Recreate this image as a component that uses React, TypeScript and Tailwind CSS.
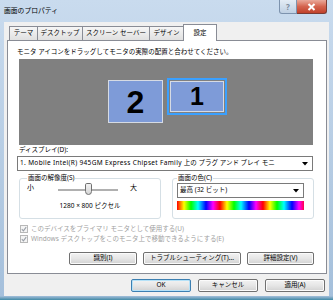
const jp = "font-['Noto_Sans','Noto_Sans_CJK_JP',sans-serif]";

function Tab({ label, width, selected }: { label: string; width: number; selected?: boolean }) {
  return (
    <div
      style={{ width }}
      className={[
        "-ml-px flex items-center justify-center border border-b-0 border-[#898c95] text-[6.5px] leading-none",
        selected
          ? "relative z-10 -mb-px h-[17px] bg-white px-[2px]"
          : "h-[14px] bg-gradient-to-b from-[#f6f6f6] to-[#e0e0e0]",
      ].join(" ")}
    >
      {label}
    </div>
  );
}

function Button({ label, width, focused }: { label: string; width: number; focused?: boolean }) {
  return (
    <div
      style={{ width }}
      className={[
        "flex h-[13px] items-center justify-center rounded-[2px] border bg-gradient-to-b from-[#f3f3f3] via-[#e6e6e6] to-[#d2d2d2] text-[6.5px] leading-none",
        focused ? "border-[#3c7fb1] shadow-[inset_0_0_0_1px_#b6e2f8]" : "border-[#707070] shadow-[inset_0_0_0_1px_#fbfbfb]",
      ].join(" ")}
    >
      {label}
    </div>
  );
}

function CheckRow({ label }: { label: string }) {
  return (
    <div className="flex h-[10px] items-center gap-[3px] pl-[12px] text-[6.5px] leading-none text-[#a0a0a0]">
      <span className="flex h-[8px] w-[8px] items-center justify-center border border-[#b8b8b8] bg-[#f4f4f4]">
        <svg width="6" height="6" viewBox="0 0 6 6">
          <path d="M0.8 3.2 L2.4 4.8 L5.2 1.2" fill="none" stroke="#9aa0a8" strokeWidth="1.1" />
        </svg>
      </span>
      {label}
    </div>
  );
}

export default function App() {
  return (
    <div className={`flex h-[300px] w-[333px] flex-col overflow-hidden bg-gradient-to-b from-[#c9dbee] via-[#b7cde4] to-[#a4bfdb] text-black ${jp}`}>
      <div className="relative flex h-[22px] shrink-0 items-center pl-[4px] text-[6.8px] leading-none">
        画面のプロパティ
        <div className="absolute right-[6px] top-0 flex">
          <div className="flex h-[14px] w-[18px] items-center justify-center rounded-bl-[3px] border border-t-0 border-[#7d93ae] bg-gradient-to-b from-[#e4ecf5] to-[#bfd0e3] text-[8px] font-bold text-[#7b8a9c]">
            ?
          </div>
          <div className="flex h-[14px] w-[30px] items-center justify-center rounded-br-[3px] border border-l-0 border-t-0 border-[#7a3b33] bg-gradient-to-b from-[#e9a99b] via-[#d4644f] to-[#c0402a]">
            <svg width="9" height="8" viewBox="0 0 9 8">
              <path d="M1.5 1 L7.5 7 M7.5 1 L1.5 7" stroke="#fff" strokeWidth="2" />
            </svg>
          </div>
        </div>
      </div>

      <div className="mx-[4px] flex h-[274px] shrink-0 flex-col bg-[#f0f0f0]">
        <div className="flex h-[18px] items-end pl-[6px]">
          <Tab label="テーマ" width={29} />
          <Tab label="デスクトップ" width={46} />
          <Tab label="スクリーン セーバー" width={68} />
          <Tab label="デザイン" width={35} />
          <Tab label="設定" width={34} selected />
        </div>

        <div className="ml-[3px] h-[234px] w-[320px] border border-[#898c95] bg-white">
          <div className="ml-[9px] mt-[7px] h-[8px] text-[6.5px] leading-[8px]">
            モニタ アイコンをドラッグしてモニタの実際の配置と合わせてください。
          </div>

          <div className="relative ml-[11px] mt-[3px] h-[86px] w-[294px] bg-[#808080]">
            <div className="absolute left-[89px] top-[21px] flex h-[43px] w-[55px] items-center justify-center border border-[#d6dbe4] bg-[#7e9bd8] font-['Liberation_Sans',sans-serif] text-[32px] font-bold leading-none">
              2
            </div>
            <div className="absolute left-[148px] top-[19px] h-[37px] w-[60px] border-2 border-[#3aa0ff] p-px">
              <div className="flex h-full w-full items-center justify-center border border-[#d6dbe4] bg-[#7e9bd8] font-['Liberation_Sans',sans-serif] text-[25px] font-bold leading-none">
                1
              </div>
            </div>
          </div>

          <div className="ml-[11px] mt-px h-[8px] text-[6.5px] leading-[8px]">ディスプレイ(D):</div>

          <div className="ml-[9px] mt-[2px] flex h-[15px] w-[296px] items-center justify-between border border-[#7a7a7a] pl-[2px] pr-[4px] text-[6.5px] leading-none">
            <span>
              <span className="tracking-[0.33px]">1. Mobile Intel(R) 945GM Express Chipset Family </span>
              上の プラグ アンド プレイ モニ
            </span>
            <svg width="6" height="4" viewBox="0 0 6 4">
              <path d="M0 0 H6 L3 3.5 Z" fill="#000" />
            </svg>
          </div>

          <div className="ml-[11px] mt-[3px] flex gap-[11px]">
            <fieldset className="h-[45px] w-[142px] rounded-[3px] border border-[#d5dfe5] px-[7px]">
              <legend className="px-[1px] text-[6.5px] leading-[8px]">画面の解像度(S)</legend>
              <div className="flex h-[16px] items-center text-[7px] leading-none">
                <span className="-mt-[6px]">小</span>
                <div className="relative ml-[24px] h-[14px] w-[60px]">
                  <div className="absolute left-0 right-0 top-[6px] h-[2px] border border-[#b0b0b0] bg-[#e7eaea]" />
                  <div className="absolute left-[27px] top-0 h-[12px] w-[7px] rounded-[2px] rounded-b-[4px] border border-[#707070] bg-gradient-to-b from-[#f3f3f3] to-[#d6d6d6]" />
                </div>
                <span className="-mt-[6px] ml-[12px]">大</span>
              </div>
              <div className="mt-[4px] text-center text-[6.5px] leading-[8px]">1280 × 800 ピクセル</div>
            </fieldset>

            <fieldset className="h-[45px] w-[142px] rounded-[3px] border border-[#d5dfe5] px-[4px]">
              <legend className="px-[1px] text-[6.5px] leading-[8px]">画面の色(C)</legend>
              <div className="mt-[1px] flex h-[15px] w-[127px] items-center justify-between border border-[#7a7a7a] pl-[2px] pr-[4px] text-[6.5px] leading-none">
                <span>最高 (32 ビット)</span>
                <svg width="6" height="4" viewBox="0 0 6 4">
                  <path d="M0 0 H6 L3 3.5 Z" fill="#000" />
                </svg>
              </div>
              <div className="mt-[3px] h-[9px] w-[127px] bg-[repeating-linear-gradient(90deg,#ff0000_0px,#ffff00_7px,#00ff00_14px,#00ffff_21px,#0000ff_29px,#ff00ff_36px,#ff0000_43px)]" />
            </fieldset>
          </div>

          <div className="mt-[5px]">
            <CheckRow label="このデバイスをプライマリ モニタとして使用する(U)" />
            <CheckRow label="Windows デスクトップをこのモニタ上で移動できるようにする(E)" />
          </div>

          <div className="mt-[8px] flex justify-end gap-[6px] pr-[12px]">
            <Button label="識別(I)" width={68} />
            <Button label="トラブルシューティング(T)..." width={98} />
            <Button label="詳細設定(V)" width={67} />
          </div>
        </div>

        <div className="mt-[5px] flex justify-end gap-[7px] pr-[4px]">
          <Button label="OK" width={60} focused />
          <Button label="キャンセル" width={60} />
          <Button label="適用(A)" width={60} />
        </div>
      </div>

      <div className="flex-1 bg-gradient-to-b from-[#a4bfdb] to-[#3f8aa6]" />
    </div>
  );
}
